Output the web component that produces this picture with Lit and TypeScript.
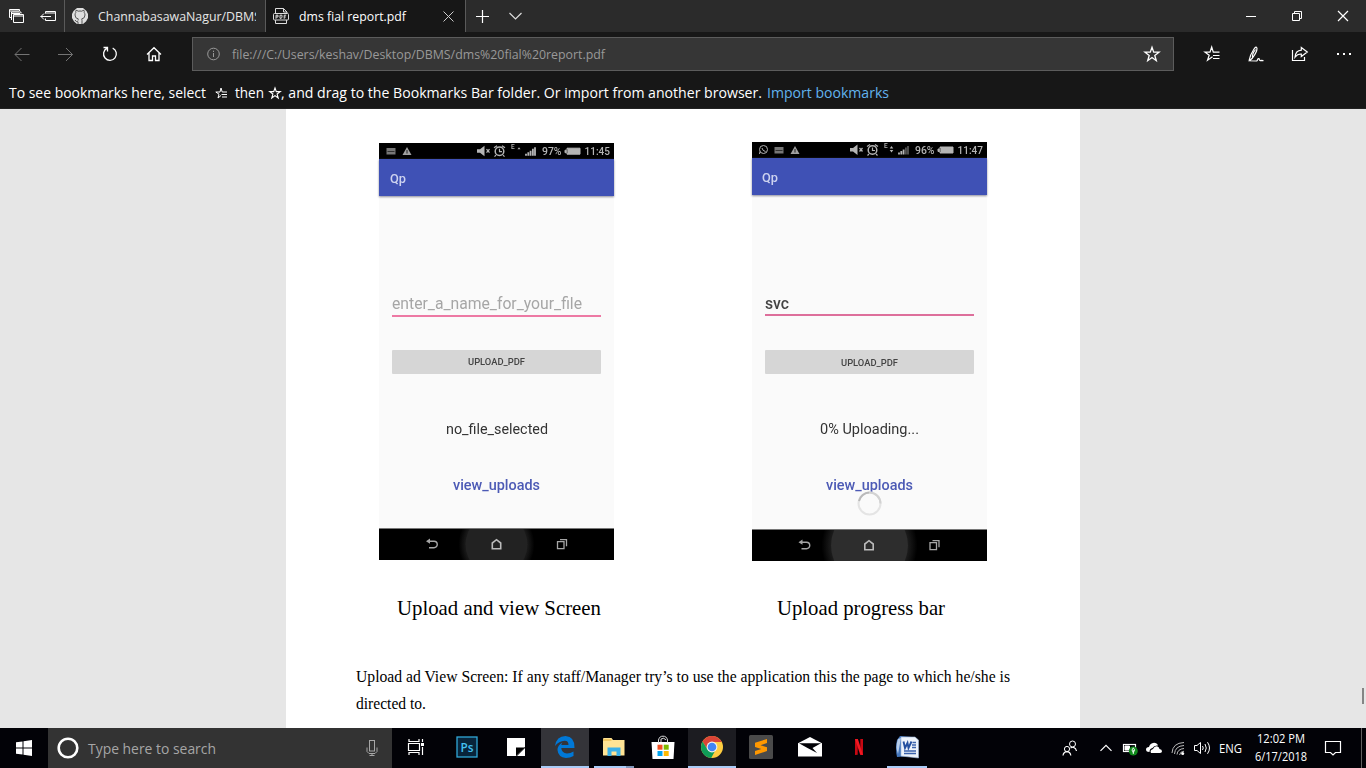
import { LitElement, html, svg, css } from "lit";
import { customElement, property } from "lit/decorators.js";

/* One line of text set to a known width; the baseline sits 15px below the box top. */
const line = (s: string, w: number, cls = "") => html`<svg class="line ${cls}" width=${w} height="20"><text x="0" y="15" textLength=${w} lengthAdjust="spacingAndGlyphs">${s}</text></svg>`;

const icon = (w: number, h: number, body: unknown, cls = "") => html`<svg class="ic ${cls}" width=${w} height=${h} viewBox="0 0 ${w} ${h}">${body}</svg>`;

const STAR = "M8 1.2 L9.7 6.2 H15 L10.8 9.4 L12.3 14.7 L8 11.5 L3.7 14.7 L5.2 9.4 L1 6.2 H6.3 Z";

const lineCss = css`
  .line, .ic { display: block; flex: none; overflow: visible; }
  .line { fill: currentColor; }
  .ic { fill: none; stroke: currentColor; stroke-width: 1; }
`;

@customElement("phone-screen")
class PhoneScreen extends LitElement {
  @property({ type: Boolean, reflect: true }) uploading = false;

  static styles = [lineCss, css`
    :host { display: flex; flex-direction: column; width: 235px; height: 417px; background: #fafafa; font-family: Roboto, sans-serif; filter: blur(0.4px); }
    :host([uploading]) { height: 419px; }
    .status { height: 16px; background: #000; color: #b5b5b5; font-size: 11.5px; font-weight: 500; }
    .status text { fill: currentColor; stroke: none; }
    .bar { height: 36.5px; box-sizing: border-box; padding: 9px 0 0 11px; background: #3f51b5; color: #cdd2ef; font-size: 13px; font-weight: 500; box-shadow: 0 1px 2px #8c8c9a; }
    :host([uploading]) .bar { height: 37px; padding-left: 10px; }
    .form { display: flex; flex-direction: column; align-items: center; flex: 1; }
    .field { width: 209px; margin-top: 99px; border-bottom: 2px solid #ed79a4; color: #a6a6a6; font-size: 16px; }
    .field .line { position: relative; top: -0.5px; }
    :host([uploading]) .field { border-bottom-color: #dd6f9b; color: #444; font-weight: 500; }
    .button { width: 209px; height: 24px; margin-top: 33px; display: flex; justify-content: center; background: #d6d6d6; border-radius: 1px; color: #444; font-size: 9px; font-weight: 500; }
    .button .line { position: relative; top: 0.5px; }
    :host([uploading]) .button { margin-top: 34px; }
    .state { margin-top: 45px; color: #333; font-size: 14.5px; }
    .link { margin-top: 36px; position: relative; color: #4c5ab5; font-size: 14.5px; font-weight: 500; }
    .spinner { position: absolute; left: 31px; top: 16px; }
    .nav { height: 32px; background: #000; color: #a6a6a6; border-top: 1px solid #777; box-sizing: border-box; }
  `];

  render() {
    const u = this.uploading;
    return html`
      <div class="status">${icon(235, 16, svg`
        ${u ? svg`<circle cx="11.5" cy="7.5" r="4" /><path d="M7.5 12 L8 9.5 M10 6 Q10.5 9 13.5 9.5" />` : ""}
        <g transform="translate(${u ? 15 : 0} 0)">
          <rect x="7.5" y="5" width="9" height="6.5" fill="#777" stroke="none" /><path d="M8.5 8.5 H15.5" stroke="#333" />
          <path d="M28 4 L32.5 12 H23.5 Z" fill="#a0a0a0" stroke="none" /><path d="M28 7 V10.5" stroke="#222" />
        </g>
        <g transform="translate(0 ${u ? -0.5 : -0.3})">
          <path d="M98 6.5 H101 L105.5 3 V13.5 L101 10 H98 Z" fill="currentColor" stroke="none" /><path d="M107.5 6.5 L110.5 10 M110.5 6.5 L107.5 10" stroke-width="1.3" />
          <circle cx="120.5" cy="8.5" r="4.3" stroke-width="1.5" /><path d="M120.5 6 V9 H123 M115 5 L118 3 M126 5 L123 3 M117 12.5 L115.5 14 M124 12.5 L125.5 14" stroke-width="1.2" />
          <text x="132" y="6" font-size="6.5">E</text>
          ${u ? svg`<path d="M139.5 4.5 L141.3 7 H137.7 Z M139.5 11 L141.3 8.5 H137.7 Z" fill="currentColor" stroke="none" />` : svg`<path d="M140 4.5 L141.5 6.5 H138.5 Z" fill="currentColor" stroke="none" />`}
          <path d="M147 11 V13 M149.3 9.5 V13 M151.6 8 V13" stroke-width="1.8" /><path d="M153.9 6 V13 M156 4.5 V13" stroke-width="1.8" stroke=${u ? "#555" : "currentColor"} />
          <text x="163" y="12" textLength="19.5" lengthAdjust="spacingAndGlyphs">${u ? "96%" : "97%"}</text>
          <path d="M188 5.5 H201 V11.5 H188 V10 H186 V7.5 H188 Z" fill="currentColor" />
          <path d="M188.2 6.5 V10.5" stroke="#444" stroke-width=".7" />
          <text x="205.5" y="12.2" textLength="25.5" lengthAdjust="spacingAndGlyphs">${u ? "11:47" : "11:45"}</text>
        </g>`)}
      </div>
      <div class="bar">${line("Qp", 16)}</div>
      <div class="form">
        <div class="field">${u ? line("svc", 24) : line("enter_a_name_for_your_file", 190)}</div>
        <div class="button">${line("UPLOAD_PDF", 57)}</div>
        <div class="state">${u ? line("0% Uploading...", 99) : line("no_file_selected", 102)}</div>
        <div class="link">${line("view_uploads", 87)}
          ${u ? html`<div class="spinner">${icon(25, 25, svg`
            <circle cx="12.5" cy="12.5" r="11" stroke="#e4e4e4" stroke-width="2" />
            <path d="M2 10 A11 11 0 0 1 12.5 1.5" stroke="#b9b9b9" stroke-width="2" />
            <path d="M12.5 1.5 A11 11 0 0 1 23.5 12.5" stroke="#d2d2d2" stroke-width="2" />`)}</div>` : ""}
        </div>
      </div>
      <div class="nav">${icon(235, 31, svg`
        <defs>
          <clipPath id="nav"><rect width="235" height="31" /></clipPath>
          <radialGradient id="halo"><stop offset=".8" stop-color="#1c1c1c" /><stop offset="1" stop-color="#000" /></radialGradient>
        </defs>
        <g clip-path="url(#nav)" stroke="none">
          <circle cx="117.5" cy="15.5" r=${u ? 48 : 38} fill="url(#halo)" />
          <circle cx="117.5" cy="15.5" r=${u ? 38.5 : 31} fill=${u ? "#2d2d2d" : "#222"} />
        </g>
        <g transform="translate(${u ? -0.5 : 0} -0.3)">
          <path d="M49.5 12.5 H55 A3 3 0 0 1 55 19 H50" stroke-width="1.4" /><path d="M51 9.9 L47 12.5 L51 15.1 Z" fill="currentColor" stroke="none" />
          <path d="M113.3 20 V14.3 L117.5 11 L121.7 14.3 V20 Z" stroke-width="1.6" stroke="#bbb" />
          <path d="M178.5 13 H185 V20 H178.5 Z M181 11 H187.5 V17.5" stroke-width="1.3" />
        </g>`)}
      </div>`;
  }
}

@customElement("app-root")
class AppRoot extends LitElement {
  static styles = [lineCss, css`
    :host { display: flex; flex-direction: column; width: 1366px; height: 768px; overflow: hidden; background: #171717; color: #fff; font-family: "Open Sans", "Noto Sans", sans-serif; }
    .tabs { display: flex; height: 32px; background: #2b2b2b; font-size: 13px; }
    .cell { display: flex; align-items: center; justify-content: center; flex: none; }
    .w24 { width: 24px; } .w32 { width: 32px; } .w33 { width: 33px; } .w44 { width: 44px; } .w46 { width: 46px; }
    .tab { display: flex; box-sizing: border-box; width: 201px; height: 32px; padding: 0 8px 0 7px; align-items: center; border-left: 1px solid #5a5a5a; gap: 10px; color: #e6e6e6; }
    .tab.active { background: #171717; border-right: 1px solid #5a5a5a; color: #fff; }
    .clip { width: 158px; overflow: hidden; }
    .tab .line { position: relative; top: -0.5px; }
    .close { margin-left: 27px; }
    .grow { flex: 1; }
    .tools { display: flex; height: 44px; align-items: center; }
    .dim { color: #747474; }
    .address { display: flex; box-sizing: border-box; width: 982px; height: 34px; margin: 0 16px; padding: 0 13px; align-items: center; border: 1px solid #5c5c5c; background: #363636; color: #999; font-size: 13px; }
    .address .line { margin-left: 12px; }
    .address .fav { margin-left: auto; color: #fff; }
    .bookmarks { display: flex; height: 33px; box-sizing: border-box; padding: 7px 0 0 9px; font-size: 15px; border-bottom: 1px solid #222; }
    .bookmarks .star { margin: 4px 8px 0 9px; } .bookmarks .star2 { margin: 4px 0 0 5px; }
    .import { margin-left: 5px; color: #62b3ee; }
    .view { display: flex; height: 619px; justify-content: center; background: #e6e6e6; overflow: hidden; position: relative; }
    .thumb { position: absolute; right: 2px; top: 579px; width: 2px; height: 16px; background: #858585; }
    .page { width: 794px; background: #fff; color: #000; font-family: "Liberation Serif", "Times New Roman", serif; }
    .shots { display: flex; padding: 33px 0 0 93px; gap: 138px; height: 453px; box-sizing: border-box; }
    .shots phone-screen { margin-top: 1px; } .shots phone-screen[uploading] { margin-top: 0; }
    .captions { display: flex; padding: 38px 0 0 111px; gap: 176px; font-size: 21px; }
    .copy { padding: 47px 0 0 70px; display: flex; flex-direction: column; gap: 7px; font-size: 16px; }
    .taskbar { display: flex; height: 40px; background: #020207; font-size: 12px; }
    .start { width: 48px; }
    .search { display: flex; box-sizing: border-box; width: 344px; padding: 0 14px 0 8px; align-items: center; background: #333; color: #a6a6a6; font-size: 15px; }
    .search .line { margin: 2px 0 0 8px; } .search .mic { margin-left: auto; }
    .apps { display: flex; gap: 1px; }
    .app { width: 48px; box-sizing: border-box; display: flex; align-items: center; justify-content: center; border-bottom: 2px solid transparent; }
    .app:first-child { margin-right: 2px; }
    .edge { background: #343439; border-color: #a9cbf7; } .chrome { background: #1c1c21; border-color: #a9cbf7; }
    .running { width: 40px; margin: 0 4px; border-color: #a9cbf7; }
    .word { margin: 0 4px 0 3px; }
    .files { border-image: linear-gradient(to right, #a9cbf7 78%, #8096ba 78%) 2; }
    .ps { font-size: 13px; font-family: "Open Sans", sans-serif; }
    .clock { width: 54px; display: flex; flex-direction: column; align-items: center; margin-left: 12px; }
    .clock .line:last-child { margin-top: -2px; }
    .lang { margin-left: 5px; }
    .note { margin-left: 13px; } .show { margin-left: 16px; border-left: 1px solid #606060; width: 4px; }
    .people { margin-right: 12px; }
  `];

  render() {
    const star = svg`<path d=${STAR} />`;
    return html`
      <div class="tabs">
        <div class="cell w32">${icon(16, 16, svg`<path d="M1.5 9.5 V1.5 H11.5 V3 M3.5 12 V4 H13 V5.5 M1.5 3 H11 M3 5.5 H12 M1.5 9.5 H3.5" /><path d="M5.5 6.5 H15.5 V14.5 H5.5 Z M5.5 8 H15" />`)}</div>
        <div class="cell w32">${icon(16, 16, svg`<path d="M5.5 5.5 V3.5 H15.5 V12.5 H5.5 V10.5 M5.5 5 H15.5 M11 8.5 H0.5 M4 5.5 L1 8.5 L4 11.5" />`)}</div>
        <div class="tab">${icon(16, 16, svg`<rect width="16" height="16" fill="#dedede" stroke="none" /><path d="M0 0 H5 L1.5 3 L0 6 Z M11 0 H16 V6 L14.5 3 Z M0 10 L2 13.5 L5 16 H0 Z M16 10 L14 13.5 L11 16 H16 Z" fill="#2b2b2b" stroke="none" /><path d="M6 16 V13.8 Q4 14 3 12 M10 16 V12.5 Q10 11.4 9.5 11 Q13 10.5 13 7 Q13 5.5 12.2 4.5 Q12.5 3.5 12 2.3 Q11 2.3 9.8 3.2 Q8 2.8 6.2 3.2 Q5 2.3 4 2.3 Q3.5 3.5 3.8 4.5 Q3 5.5 3 7 Q3 10.5 6.5 11 Q6 11.5 6 12.5" stroke="#555" stroke-width="1" />`)}
          <div class="clip">${line("ChannabasawaNagur/DBMS", 163)}</div></div>
        <div class="tab active">${icon(16, 16, svg`<g stroke="#ddd"><path d="M2.5 5 V.5 H10.5 L14 4 V5 M10.5 .5 V4 H14 M2.5 12 V15.5 H13.5 V12" /><rect x=".5" y="5.5" width="15" height="6.5" rx="1" /><path d="M3 10.8 V7.2 H5 V9 H3 M7 7.2 V10.3 H8 L9 9.5 V7.2 H7 M11.2 10.8 V7.2 H13.2 M11.2 9 H12.8" /></g>`)}
          ${line("dms fial report.pdf", 107)}
          <div class="close">${icon(11, 11, svg`<path d="M.5 .5 L10.5 10.5 M10.5 .5 L.5 10.5" stroke="#ccc" />`)}</div></div>
        <div class="cell w33">${icon(13, 13, svg`<path d="M6.5 0 V13 M0 6.5 H13" stroke-width="1.2" />`)}</div>
        <div class="cell w32">${icon(13, 8, svg`<path d="M.5 1 L6.5 7 L12.5 1" stroke="#ddd" stroke-width="1.2" />`)}</div>
        <div class="grow"></div>
        <div class="cell w46">${icon(10, 10, svg`<path d="M0 5.5 H10" />`)}</div>
        <div class="cell w46">${icon(10, 10, svg`<path d="M.5 2.5 H7.5 V9.5 H.5 Z M2.5 2.5 V.5 H9.5 V7.5 H7.5" />`)}</div>
        <div class="cell w46">${icon(10, 10, svg`<path d="M0 0 L10 10 M10 0 L0 10" stroke-width="1.2" />`)}</div>
      </div>
      <div class="tools">
        <div class="cell w44 dim">${icon(16, 14, svg`<path d="M15.5 7.5 H1 M7.5 1 L1 7.5 L7.5 14" />`)}</div>
        <div class="cell w44 dim">${icon(16, 14, svg`<path d="M0 7.5 H14.5 M8 1 L14.5 7.5 L8 14" />`)}</div>
        <div class="cell w44">${icon(16, 16, svg`<path d="M5 2.2 A6.4 6.4 0 1 0 10.7 2.1 M1.5 1.5 H5.5 V5.5" stroke-width="1.3" />`)}</div>
        <div class="cell w44">${icon(16, 16, svg`<path d="M1 8.5 L8 1.7 L15 8.5 M3 7 V14.5 H6.5 V10 H9.5 V14.5 H13 V7" stroke-width="1.3" />`)}</div>
        <div class="address">${icon(14, 14, svg`<circle cx="7.5" cy="7" r="5.8" /><path d="M7.5 6 V10 M7.5 3.7 V5" />`)}
          ${line("file:///C:/Users/keshav/Desktop/DBMS/dms%20fial%20report.pdf", 373)}
          <div class="fav">${icon(16, 16, svg`<path d=${STAR} stroke-width="1.3" />`)}</div></div>
        <div class="cell w44">${icon(16, 16, svg`<path d="M8.5 10.8 L3.5 14.2 L5.2 9.2 L1 6.2 H6 L7.7 1 L9.3 6.2 H15.5 M9 9.5 H15.5 M9 12.5 H15.5" stroke-width="1.2" />`)}</div>
        <div class="cell w44">${icon(16, 16, svg`<path d="M1 14.8 Q2 9 6 3 Q8.5 -.5 9 2.5 Q9 6 4.5 12 L1.5 14.8 L9 15 M4.5 11.5 Q4 8 7.5 3.5 M9 15 Q10 11.5 11.3 13 Q11.2 15 13 14.4 L15.5 14.6" stroke-width="1.2" />`)}</div>
        <div class="cell w44">${icon(16, 16, svg`<path d="M.5 4 V14.5 H12.5 V11 M9.3 1.5 L15.3 6 L9.3 10.5 V8 Q5.5 7.8 3 11.2 Q3.6 4.6 9.3 4.2 Z" stroke-width="1.2" />`)}</div>
        <div class="cell w44">${icon(16, 4, svg`<path d="M1 2 H3 M7 2 H9 M13 2 H15" stroke-width="2" />`)}</div>
      </div>
      <div class="bookmarks">
        ${line("To see bookmarks here, select", 197)}
        <div class="star">${icon(12, 12, svg`<path d="M6 8.5 L3 11 L4 7.2 L.8 5 H5 L6 1 L7.2 5 H12 M6.5 7.5 H12 M7 10 H12" />`)}</div>
        ${line("then", 29)}
        <div class="star2">${icon(12, 12, svg`<g transform="scale(.75)" stroke-width="1.5">${star}</g>`)}</div>
        ${line(", and drag to the Bookmarks Bar folder. Or import from another browser.", 481)}
        <div class="import">${line("Import bookmarks", 122)}</div>
      </div>
      <div class="view">
        <div class="page">
          <div class="shots"><phone-screen></phone-screen><phone-screen uploading></phone-screen></div>
          <div class="captions">${line("Upload and view Screen", 204)}${line("Upload progress bar", 168)}</div>
          <div class="copy">
            ${line("Upload ad View Screen: If any staff/Manager try’s to use the application this the page to which he/she is", 654)}
            ${line("directed to.", 70)}
          </div>
        </div>
        <div class="thumb"></div>
      </div>
      <div class="taskbar">
        <div class="cell start">${icon(16, 16, svg`<path d="M0 2.3 L6.5 1.4 V7.5 H0 Z M7.5 1.2 L16 0 V7.5 H7.5 Z M0 8.5 H6.5 V14.6 L0 13.7 Z M7.5 8.5 H16 V16 L7.5 14.8 Z" fill="#fff" stroke="none" />`)}</div>
        <div class="search">${icon(24, 24, svg`<circle cx="12" cy="12" r="9.3" stroke="#fff" stroke-width="2.6" />`)}
          ${line("Type here to search", 128)}
          <div class="mic">${icon(12, 16, svg`<rect x="3.5" y=".5" width="5" height="10.5" /><path d="M1 7.5 V11.5 L3 13.5 H9 L11 11.5 V7.5 M6 13.5 V15.5 M3.5 15.5 H8.5" />`)}</div></div>
        <div class="apps">
          <div class="app">${icon(16, 16, svg`<path d="M1 0 V2.5 H11 V0 M.5 4.5 H11.5 V11.5 H.5 Z M1 16 V13.5 H11 V16 M14.5 0 V3 M14.5 8 V16" stroke-width="1.2" /><path d="M13 4 H16 V7 H13 Z" fill="#fff" stroke="none" />`)}</div>
          <div class="app ps">${icon(22, 22, svg`<rect x="1" y="1" width="20" height="20" fill="#08243a" stroke="#31a8d8" stroke-width="1.3" /><text x="4.5" y="15.5" fill="#43c0f0" stroke="none" font-weight="600" textLength="13" lengthAdjust="spacingAndGlyphs">Ps</text>`)}</div>
          <div class="app">${icon(18, 18, svg`<path d="M0 0 H18 V9 L9 18 H0 Z" fill="#fff" stroke="none" /><path d="M9 18 V9.5 H18 Z" fill="#000" stroke="none" /><path d="M10 18 L18 10 V18 Z" fill="#fff" stroke="none" />`)}</div>
          <div class="app edge">${icon(20, 22, svg`<path d="M0 10 Q1.5 0 10.5 0 Q20 .7 19.5 12 H6.3 Q6.5 17 12 17.4 Q15.5 17.3 18.5 15.4 V20 Q15 22 11 22 Q3 21 2.5 14 Q2.5 9 7.5 6.4 Q6.5 7.8 6.3 9 H13.5 Q13.5 4.5 9.5 4.7 Q4 5 0 10 Z" fill="#0078d7" stroke="none" />`)}</div>
          <div class="app running files">${icon(22, 18, svg`<path d="M0 1 Q0 0 1 0 H8.5 L10 2 H21.5 V17.5 H0 Z" fill="#ffe394" stroke="none" /><path d="M0 2 H8.5" stroke="#e6ad32" /><path d="M4.5 18 V9.5 H17.5 V18 H13.5 V13.5 H8.5 V18 Z" fill="#3ab0e8" stroke="none" />`)}</div>
          <div class="app">${icon(24, 24, svg`<path d="M.5 7 H23.5 L22.5 24 H1.5 Z" fill="#fff" stroke="none" /><path d="M7.5 8 V5 Q8.5 1 12 1.2 Q15.5 1 16.5 5 V8 M10 7 V4 Q13 2 15 5" stroke="#ddd" /><path d="M6.5 9.7 H11.5 V14.7 H6.5 Z" fill="#f25022" stroke="none" /><path d="M12.7 9.7 H17.7 V14.7 H12.7 Z" fill="#7fba00" stroke="none" /><path d="M6.5 16 H11.5 V21 H6.5 Z" fill="#00a4ef" stroke="none" /><path d="M12.7 16 H17.7 V21 H12.7 Z" fill="#ffb900" stroke="none" />`)}</div>
          <div class="app chrome">${icon(22, 22, svg`<g stroke="none"><circle cx="11" cy="11" r="11" fill="#ffcd40" /><path d="M1.5 5.5 A11 11 0 0 1 20.5 5.5 L20.8 6 H11 L6.5 13.5 Z" fill="#db4437" /><path d="M1.5 5.5 L6.5 13.5 L11 16 L14 15 L10.2 22 A11 11 0 0 1 1.5 5.5 Z" fill="#0f9d58" /><circle cx="11" cy="11" r="5.4" fill="#f1f1f1" /><circle cx="11" cy="11" r="4.3" fill="#4285f4" /></g>`)}</div>
          <div class="app">${icon(24, 24, svg`<rect width="24" height="24" rx="1.5" fill="#4a4a4a" stroke="none" /><path d="M6 7.8 L18 4 V8 L11.5 10.2 L18 12.2 V16 L6 20 V16 L12.3 14 L6 12 Z" fill="#ff9800" stroke="none" />`)}</div>
          <div class="app">${icon(24, 20, svg`<path d="M0 6.3 L12 0 L24 6.3 V19.5 H0 Z" fill="#fff" stroke="none" /><path d="M1 6.3 H23 L14.5 11 L19 16 L9.5 11 Z" fill="#020207" stroke="none" />`)}</div>
          <div class="app">${icon(10, 18, svg`<path d="M1 1 H3.7 V16.7 L1 17 Z M6.3 1 H9 V17 L6.3 16.7 Z" fill="#c70812" stroke="none" /><path d="M1 1 H3.9 L9 17 L6.2 16.7 Z" fill="#f01822" stroke="none" />`)}</div>
          <div class="app running word">${icon(23, 23, svg`<path d="M4 0 L16 1 L14 20 L1 21 Q-1 12 1 4 Z" fill="#4477bd" stroke="none" /><path d="M2 3 Q-1 11 2 18 L5 2 Z" fill="#b7cdea" stroke="none" /><path d="M5 1 H19 L22.5 4 V22 L5 20 Z" fill="#edf3fb" stroke="#9db7d9" stroke-width=".6" /><path d="M7.5 5.5 L9 12 L11.5 7 L12.5 12 L15.5 5.5" stroke="#2450a0" stroke-width="1.9" /><path d="M16.5 6.5 H20 M16 9 H20 M16 11.5 H20 M8 15 H20 M8 17.5 H20" stroke="#3b63ad" stroke-width="1.3" />`)}</div>
        </div>
        <div class="grow"></div>
        <div class="cell w24 people">${icon(16, 16, svg`<circle cx="10.5" cy="4" r="3" /><circle cx="5" cy="9" r="2.6" /><path d="M1 15.5 Q1.5 11.7 5 11.6 Q8.3 11.7 8.8 15.5 M8.5 8 Q10 7 11.5 7.3 Q14 8 14.5 11" stroke-width="1.2" />`)}</div>
        <div class="cell w24">${icon(12, 8, svg`<path d="M.5 6.8 L6 1.3 L11.5 6.8" stroke-width="1.2" />`)}</div>
        <div class="cell w24">${icon(16, 14, svg`<rect x="1.5" y="3.5" width="12" height="7" stroke-width="1.2" /><path d="M3 5 H7.5 V9 H3 Z" fill="#fff" /><circle cx="11.3" cy="10" r="4.5" fill="#108a1c" stroke="none" /><path d="M11.3 6.8 Q14 9 11.3 11.5 Q8.7 9 11.3 6.8 M11.3 9 V13" stroke-width=".9" />`)}</div>
        <div class="cell w24">${icon(16, 12, svg`<path d="M3.5 10 Q0 10 0 7.5 Q0 5 3 5 Q4 1 8 .7 Q11 .7 12 3.5 Q8 3 6.5 6 Q3.5 6.5 3.5 10 Z M5 11 Q3.5 8 7 7 Q8.5 3.6 11.5 4.5 Q13.3 5.2 13.5 7 Q16 7.3 16 9.3 Q16 11 14 11 Z" fill="#fff" stroke="none" />`)}</div>
        <div class="cell w24">${icon(14, 14, svg`<path d="M1 12 Q1.5 2 13 1.5 M3.5 13 Q4 5 13 4.5 M6 13.5 Q6.5 8 13 7.5 M8.5 14 Q9 10.5 13 10.2" stroke="#bbb" /><circle cx="11.7" cy="12.5" r="1.5" fill="#fff" stroke="none" />`)}</div>
        <div class="cell w24">${icon(17, 14, svg`<path d="M.5 4.5 H3 L6.5 1.5 V12.5 L3 9.5 H.5 Z M8.5 5 Q10 7 8.5 9 M11 3 Q13.5 7 11 11 M13.5 1.2 Q17.5 7 13.5 12.8" />`)}</div>
        <div class="cell lang">${line("ENG", 23)}</div>
        <div class="clock">${line("12:02 PM", 48)}${line("6/17/2018", 52)}</div>
        <div class="cell w24 note">${icon(16, 16, svg`<path d="M.5 1.5 H15.5 V12.5 H10.5 L8 15 L5.5 12.5 H.5 Z" stroke-width="1.2" />`)}</div>
        <div class="show"></div>
      </div>`;
  }
}
